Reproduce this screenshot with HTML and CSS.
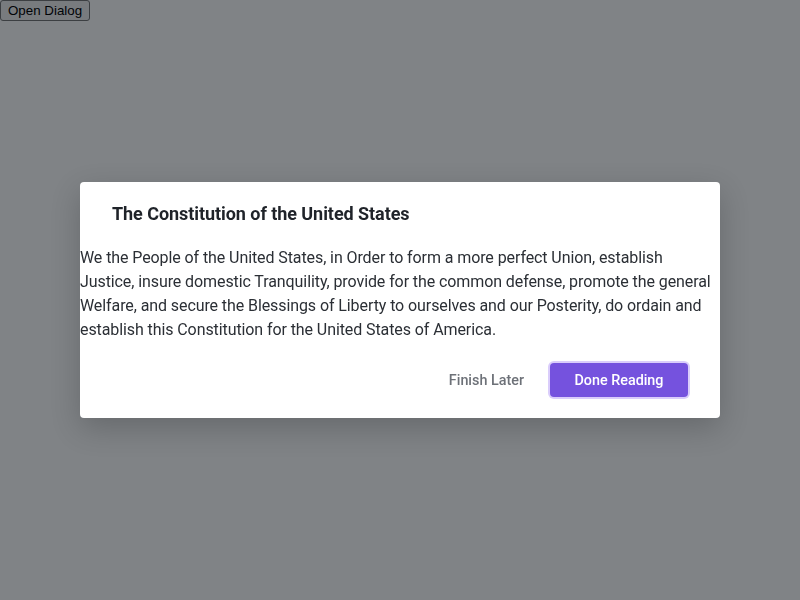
FILE: index.html
```html
<!DOCTYPE html>
<html lang="en">
<head>
<meta charset="utf-8">
<title>Dialog</title>
<link rel="stylesheet" href="styles.css">
</head>
<body>
<button class="open-btn" type="button">Open Dialog</button>
<div class="overlay">
  <div class="dialog" role="dialog" aria-modal="true">
    <h2 class="dialog-title">The Constitution of the United States</h2>
    <p class="dialog-body">We the People of the United States, in Order to form a more perfect Union, establish Justice, insure domestic Tranquility, provide for the common defense, promote the general Welfare, and secure the Blessings of Liberty to ourselves and our Posterity, do ordain and establish this Constitution for the United States of America.</p>
    <div class="dialog-actions">
      <button class="btn btn-ghost" type="button">Finish Later</button>
      <button class="btn btn-primary" type="button">Done Reading</button>
    </div>
  </div>
</div>
</body>
</html>
```
FILE: styles.css
```css
html, body {
  margin: 0;
  padding: 0;
  height: 100%;
}
body {
  background: #ffffff;
  font-family: Roboto, "Liberation Sans", sans-serif;
}
.open-btn {
  font-family: "Liberation Sans", Arial, sans-serif;
  font-size: 13.33px;
  padding: 1px 7px;
  margin: 0;
  background: #efefef;
  border: 1px solid #767676;
  border-radius: 3px;
  color: #000;
  height: 21px;
}
.overlay {
  position: fixed;
  inset: 0;
  background: rgba(2, 8, 14, 0.5);
  display: flex;
  align-items: center;
  justify-content: center;
}
.dialog {
  width: 640px;
  background: #ffffff;
  border-radius: 4px;
  box-shadow: 0 10px 30px rgba(0, 0, 0, 0.2);
  display: flex;
  flex-direction: column;
}
.dialog-title {
  margin: 0;
  padding: 18px 32px 0;
  font-size: 18px;
  line-height: 27px;
  font-weight: 700;
  letter-spacing: -0.06px;
  color: #1f2329;
}
.dialog-body {
  margin: 19px 0 0;
  padding: 0;
  font-size: 16px;
  line-height: 24px;
  letter-spacing: -0.09px;
  color: #2b2f35;
}
.dialog-actions {
  display: flex;
  justify-content: flex-end;
  align-items: center;
  gap: 26px;
  padding: 21px 32px 21px 32px;
}
.btn {
  font-family: Roboto, "Liberation Sans", sans-serif;
  font-size: 14.35px;
  font-weight: 500;
  border: none;
  cursor: pointer;
  height: 34px;
  padding: 0 24.5px;
  border-radius: 4px;
}
.btn-ghost {
  background: transparent;
  color: #6d7178;
  padding: 0;
}
.btn-primary {
  background: #7552de;
  color: #ffffff;
  box-shadow: 0 0 0 2px #dacdfb;
}
```
